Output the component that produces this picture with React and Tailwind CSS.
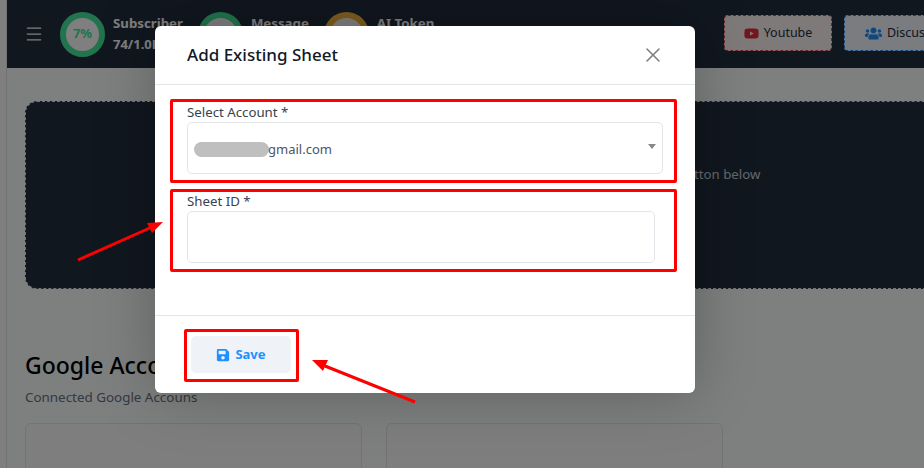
import React from "react";
import { Menu, X } from "lucide-react";
import { FaYoutube, FaUsers, FaSave } from "react-icons/fa";

function Gauge({ pct, label, sub, color }) {
  return (
    <div className="flex items-center gap-[8px]">
      <div className="w-[45px] h-[45px] rounded-full border-[6px] bg-white flex items-center justify-center" style={{ borderColor: color }}>
        <span className="text-[13px] font-bold" style={{ color }}>{pct}</span>
      </div>
      <div className="text-[13.25px] leading-[21px] font-bold text-white whitespace-nowrap">
        <div>{label}</div>
        <div className="h-[21px] text-[13px]">{sub}</div>
      </div>
    </div>
  );
}

function Arrow({ className, points, head }) {
  return (
    <svg className={className} width="924" height="468" viewBox="0 0 924 468">
      <line x1={points[0]} y1={points[1]} x2={points[2]} y2={points[3]} stroke="#ff0000" strokeWidth="3" />
      <polygon points={head} fill="#ff0000" />
    </svg>
  );
}

export default function App() {
  return (
    <div className="relative w-[924px] h-[468px] overflow-hidden flex bg-[#ffffff] font-['Noto_Sans','Open_Sans',sans-serif]">
      <div className="w-[7px] shrink-0 bg-[#ffffff] border-r border-[#e5e5e5]" />
      <div className="flex-1 min-w-0 flex flex-col bg-[#fdfeff]">
        <header className="h-[68px] shrink-0 bg-[#222f3e] flex items-center pl-[17px] whitespace-nowrap overflow-hidden">
          <Menu size={20} strokeWidth={1.5} className="text-white mr-[16px] shrink-0" />
          <div className="flex items-center gap-[15px] w-[664px] shrink-0">
            <Gauge pct="7%" label="Subscriber" sub="74/1.0K" color="#42e89a" />
            <Gauge pct="" label="Message" sub="" color="#42e89a" />
            <Gauge pct="" label="AI Token" sub="" color="#ffb83c" />
          </div>
          <button className="w-[108px] h-[36px] mb-[2px] shrink-0 rounded-[4px] border border-dashed border-[#e0455a] bg-[#fff5f5] flex items-center justify-center gap-[5px] text-[12.5px] text-[#222f3e]">
            <FaYoutube size={15} className="text-[#e0303a]" /> Youtube
          </button>
          <button className="w-[108px] h-[36px] mb-[2px] ml-[12px] shrink-0 rounded-[4px] border border-dashed border-[#1e90ff] bg-[#f5f8ff] flex items-center justify-center gap-[5px] text-[12.5px] text-[#222f3e]">
            <FaUsers size={17} className="text-[#1e90ff]" /> Discuss
          </button>
        </header>

        <main className="flex-1 min-h-0 pl-[18px] pt-[33px] overflow-hidden">
          <div className="h-[188px] w-[1000px] rounded-[12px] border border-dashed border-[#e5e7eb] bg-[#222f3e] flex items-center">
            <p className="ml-[668px] mb-[40px] text-[13.25px] text-[#c8d0d8]">tton below</p>
          </div>
          <h2 className="mt-[60px] text-[23px] leading-[32px] font-medium text-[#000000]">Google Accounts</h2>
          <p className="mt-[6px] text-[13.4px] leading-[20px] text-[#6b7280]">Connected Google Accouns</p>
          <div className="mt-[16px] flex gap-[24px]">
            <div className="w-[337px] h-[100px] rounded-[6px] border border-[#e5e7eb] bg-[#fffdfc]" />
            <div className="w-[337px] h-[100px] rounded-[6px] border border-[#e5e7eb] bg-[#fffdfc]" />
          </div>
        </main>
      </div>

      {/* modal backdrop */}
      <div className="absolute inset-0 bg-black/50" />

      <div className="absolute left-[155px] top-[26px] w-[540px] h-[367px] bg-white rounded-[6px] shadow-[0_0_60px_rgba(0,0,0,0.25)] flex flex-col">
        <div className="h-[59px] shrink-0 border-b border-[#e2e5ea] flex items-center justify-between pl-[32px] pr-[30px]">
          <h3 className="text-[17px] font-medium text-[#111827]">Add Existing Sheet</h3>
          <X size={24} strokeWidth={1.6} className="text-[#808080]" />
        </div>
        <div className="h-[231px] shrink-0 border-b border-[#e2e5ea] pt-[18px] pl-[32px] pr-[32px]">
          <label className="block text-[13.25px] leading-[19px] text-[#374151]">Select Account *</label>
          <div className="relative h-[52px] pt-[3px] rounded-[5px] border border-[#e2e5ea] flex items-center pl-[6px]">
            <span className="w-[75px] h-[15px] rounded-full bg-[#bfbfbf] shrink-0" />
            <span className="ml-[-1px] text-[13px] text-[#4b5563]">gmail.com</span>
            <span className="absolute right-[6px] top-[21px] w-0 h-0 border-x-[4px] border-x-transparent border-t-[5px] border-t-[#888]" />
          </div>
          <label className="block mt-[18px] text-[13.25px] leading-[19px] text-[#374151]">Sheet ID *</label>
          <input className="block w-[468px] h-[52px] rounded-[5px] border border-[#e2e5ea] outline-none" />
        </div>
        <div className="pl-[36px] pt-[20px]">
          <button className="w-[100px] h-[37px] rounded-[5px] bg-[#eff2f6] flex items-center justify-center gap-[5px] text-[13px] font-bold text-[#1e90ff]">
            <FaSave size={14} /> Save
          </button>
        </div>
      </div>

      {/* red annotation boxes */}
      <div className="absolute left-[170px] top-[99px] w-[507px] h-[84px] border-[3px] border-[#ff0000] rounded-[2px]" />
      <div className="absolute left-[170px] top-[189px] w-[507px] h-[83px] border-[3px] border-[#ff0000] rounded-[2px]" />
      <div className="absolute left-[184px] top-[329px] w-[115px] h-[53px] border-[3px] border-[#ff0000] rounded-[2px]" />

      <Arrow className="absolute left-0 top-0" points={[78, 260, 152, 227]} head="163,222 147,223 152,233" />
      <Arrow className="absolute left-0 top-0" points={[415, 402, 325, 366]} head="312,360 328,360 323,371" />
    </div>
  );
}
